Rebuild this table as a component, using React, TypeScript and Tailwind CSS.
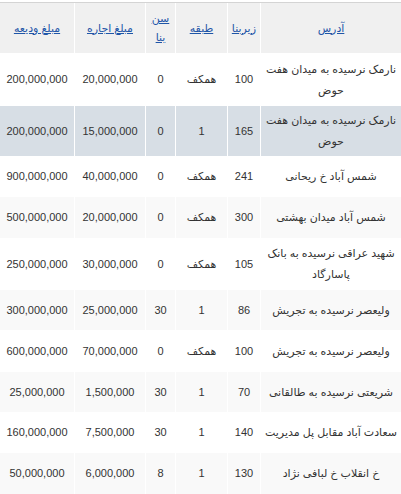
import React from "react";

type Row = {
  addr: string;
  area: string;
  floor: string;
  age: string;
  rent: string;
  deposit: string;
  rowCls: string;
};

const rows: Row[] = [
  { addr: "نارمک نرسیده به میدان هفت حوض", area: "100", floor: "همکف", age: "0", rent: "20,000,000", deposit: "200,000,000", rowCls: "h-[53px] bg-white" },
  { addr: "نارمک نرسیده به میدان هفت حوض", area: "165", floor: "1", age: "0", rent: "15,000,000", deposit: "200,000,000", rowCls: "h-[50px] bg-[#d7dee5]" },
  { addr: "شمس آباد خ ریحانی", area: "241", floor: "همکف", age: "0", rent: "40,000,000", deposit: "900,000,000", rowCls: "h-[41px] bg-white" },
  { addr: "شمس آباد میدان بهشتی", area: "300", floor: "همکف", age: "0", rent: "20,000,000", deposit: "500,000,000", rowCls: "h-[41px] bg-[#f9f9f9]" },
  { addr: "شهید عراقی نرسیده به بانک پاسارگاد", area: "105", floor: "همکف", age: "0", rent: "30,000,000", deposit: "250,000,000", rowCls: "h-[52px] bg-white" },
  { addr: "ولیعصر نرسیده به تجریش", area: "86", floor: "1", age: "30", rent: "25,000,000", deposit: "300,000,000", rowCls: "h-[40px] bg-[#f9f9f9]" },
  { addr: "ولیعصر نرسیده به تجریش", area: "100", floor: "همکف", age: "0", rent: "70,000,000", deposit: "600,000,000", rowCls: "h-[42px] bg-white" },
  { addr: "شریعتی نرسیده به طالقانی", area: "70", floor: "1", age: "30", rent: "1,500,000", deposit: "25,000,000", rowCls: "h-[40px] bg-[#f9f9f9]" },
  { addr: "سعادت آباد مقابل پل مدیریت", area: "140", floor: "1", age: "30", rent: "7,500,000", deposit: "160,000,000", rowCls: "h-[41px] bg-white" },
  { addr: "خ انقلاب خ لبافی نژاد", area: "130", floor: "1", age: "8", rent: "6,000,000", deposit: "50,000,000", rowCls: "h-[41px] bg-[#f9f9f9]" },
];

const th = "border-l border-white font-normal text-center align-middle px-[4px]";
const td = "border-l border-white text-center align-middle px-[4px] leading-[21px]";
const link = "text-[#1f56a8] underline";

export default function App() {
  return (
    <div className="w-[401px] h-[494px] overflow-hidden bg-white pt-[2px]" style={{ fontFamily: '"Liberation Sans", "DejaVu Sans", sans-serif' }}>
      <table dir="rtl" className="w-[401px] table-fixed border-separate border-spacing-0 border-t border-[#d4d4d4] text-[11px] text-[#333]">
        <colgroup>
          <col className="w-[141px]" />
          <col className="w-[33px]" />
          <col className="w-[52px]" />
          <col className="w-[30px]" />
          <col className="w-[71px]" />
          <col className="w-[74px]" />
        </colgroup>
        <thead>
          <tr className="h-[50px] bg-[#f0f0f0] leading-[19px]">
            <th className={th}><span className={link}>آدرس</span></th>
            <th className={th}><span className={link}>زیربنا</span></th>
            <th className={th}><span className={link}>طبقه</span></th>
            <th className={th}><span className={link}>سن بنا</span></th>
            <th className={th}><span className={link}>مبلغ اجاره</span></th>
            <th className="font-normal text-center align-middle px-[4px]"><span className={link}>مبلغ ودیعه</span></th>
          </tr>
        </thead>
        <tbody>
          {rows.map((r, i) => (
            <tr key={i} className={r.rowCls}>
              <td className={td}>{r.addr}</td>
              <td className={td}>{r.area}</td>
              <td className={td}>{r.floor}</td>
              <td className={td}>{r.age}</td>
              <td className={td}>{r.rent}</td>
              <td className="text-center align-middle px-[4px] leading-[21px]">{r.deposit}</td>
            </tr>
          ))}
        </tbody>
      </table>
    </div>
  );
}
